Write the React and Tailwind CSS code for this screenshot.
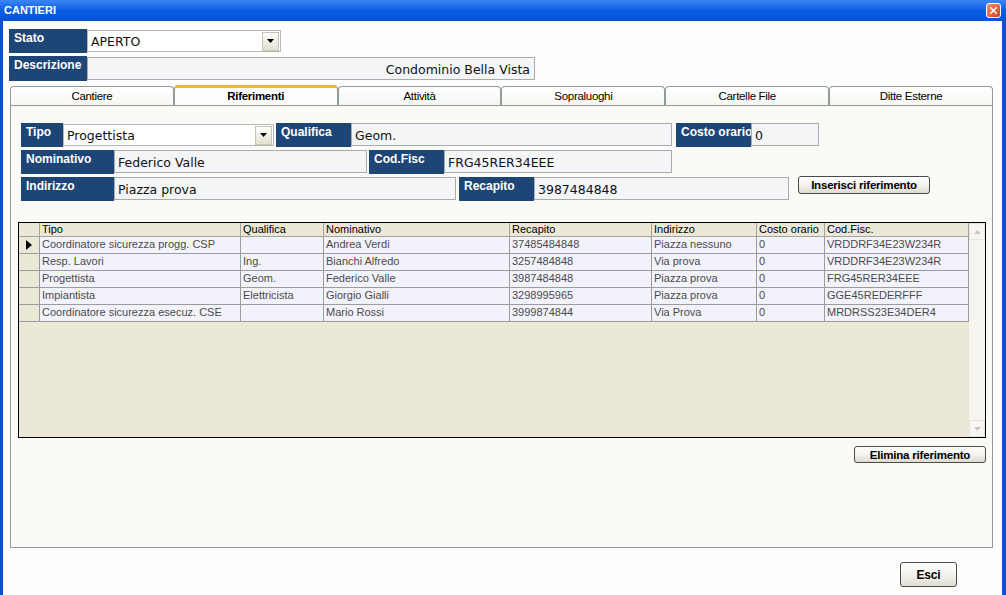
import { X } from "lucide-react";

const COLS = "grid grid-cols-[21px_201px_83px_186px_142px_105px_68px_144px]";

const righe = [
  ["Coordinatore sicurezza progg. CSP", "", "Andrea Verdi", "37485484848", "Piazza nessuno", "0", "VRDDRF34E23W234R"],
  ["Resp. Lavori", "Ing.", "Bianchi Alfredo", "3257484848", "Via prova", "0", "VRDDRF34E23W234R"],
  ["Progettista", "Geom.", "Federico Valle", "3987484848", "Piazza prova", "0", "FRG45RER34EEE"],
  ["Impiantista", "Elettricista", "Giorgio Gialli", "3298995965", "Piazza prova", "0", "GGE45REDERFFF"],
  ["Coordinatore sicurezza esecuz. CSE", "", "Mario Rossi", "3999874844", "Via Prova", "0", "MRDRSS23E34DER4"],
];

const intestazioni = ["Tipo", "Qualifica", "Nominativo", "Recapito", "Indirizzo", "Costo orario", "Cod.Fisc."];

const tabs = ["Cantiere", "Riferimenti", "Attività", "Sopraluoghi", "Cartelle File", "Ditte Esterne"];

function Etichetta({ className, children }) {
  return (
    <div className={`h-[24px] shrink-0 bg-[#1d4677] pl-[5px] pt-[2px] font-['Liberation_Sans',Arial,sans-serif] text-[12px] leading-[14px] font-bold whitespace-nowrap text-white ${className}`}>
      {children}
    </div>
  );
}

function Campo({ className, children, right }) {
  return (
    <div className={`flex h-[23px] shrink-0 items-center border border-[#a9abae] bg-[#f4f5f7] px-[3px] pt-[3px] font-['DejaVu_Sans',Verdana,sans-serif] text-[12.5px] text-[#111] ${right ? "justify-end" : ""} ${className}`}>
      {children}
    </div>
  );
}

function Freccia() {
  return (
    <div className="flex h-[19px] w-[17px] items-center justify-center border border-[#c9c5b5] bg-gradient-to-b from-[#fdfdfb] to-[#e4e1d2]">
      <svg width="7" height="4" viewBox="0 0 7 4">
        <path d="M0 0h7L3.5 4z" fill="#000" />
      </svg>
    </div>
  );
}

function Combo({ className, children }) {
  return (
    <div className={`flex h-[22px] shrink-0 items-center justify-between border border-[#b7b7b7] bg-white pr-[1px] pl-[3px] font-['DejaVu_Sans',Verdana,sans-serif] text-[12.5px] text-[#111] ${className}`}>
      <span className="pt-[2px]">{children}</span>
      <Freccia />
    </div>
  );
}

function Bottone({ className, children }) {
  return (
    <button className={`shrink-0 rounded-[3px] border border-[#4b4b4b] bg-gradient-to-b from-white via-[#f4f3ee] to-[#dedbcf] font-['Liberation_Sans',Arial,sans-serif] text-[11.5px] font-bold tracking-[-0.2px] text-black ${className}`}>
      {children}
    </button>
  );
}

export default function App() {
  return (
    <div className="flex h-[595px] w-[1006px] flex-col overflow-hidden bg-[#0a4fd6] font-['Liberation_Sans',Arial,sans-serif]">
      {/* barra titolo */}
      <div className="flex h-[21px] shrink-0 items-center justify-between bg-gradient-to-b from-[#3b86f5] via-[#0a5ce2] to-[#0352d8] pr-[5px] pl-[4px]">
        <span className="text-[11px] font-bold text-white">CANTIERI</span>
        <div className="flex h-[15px] w-[15px] items-center justify-center rounded-[3px] border border-white bg-gradient-to-br from-[#f08a6c] to-[#d4401f]">
          <X className="h-[11px] w-[11px] text-white" strokeWidth={3} />
        </div>
      </div>

      <div className="ml-[3px] mr-[4px] flex flex-1 flex-col bg-[#fdfdfb] pt-[8px]">
        <div className="flex flex-col gap-[3px] pl-[6px]">
          <div className="flex items-start">
            <Etichetta className="w-[78px]">Stato</Etichetta>
            <Combo className="mt-[1px] w-[194px]">APERTO</Combo>
          </div>
          <div className="flex items-start">
            <Etichetta className="h-[25px] w-[78px]">Descrizione</Etichetta>
            <Campo className="mt-[1px] w-[448px] pr-[4px]" right>Condominio Bella Vista</Campo>
          </div>
        </div>

        {/* schede */}
        <div className="mt-[4px] mr-[9px] ml-[7px] flex h-[20px]">
          {tabs.map((t) => (
            <div
              key={t}
              className={`flex flex-1 items-center justify-center rounded-t-[4px] border border-b-0 text-[11.5px] tracking-[-0.3px] ${t === "Riferimenti" ? "border-t-[3px] border-[#919b9c] border-t-[#f2b33d] bg-[#fdfdfb] font-bold text-black" : "mt-[1px] border-[#919b9c] bg-gradient-to-b from-white to-[#f6f6f3] pt-[2px] text-black"}`}
            >
              {t}
            </div>
          ))}
        </div>

        <div className="mr-[9px] ml-[7px] flex h-[443px] flex-col border border-[#919b9c] bg-[#fafaf7] pt-[17px] pl-[10px]">
          <div className="flex flex-col gap-[3px]">
            <div className="flex items-start">
              <Etichetta className="w-[42px]">Tipo</Etichetta>
              <Combo className="mt-[1px] w-[211px]">Progettista</Combo>
              <Etichetta className="ml-[2px] w-[75px]">Qualifica</Etichetta>
              <Campo className="w-[321px]">Geom.</Campo>
              <Etichetta className="ml-[4px] w-[75px]">Costo orario</Etichetta>
              <Campo className="w-[68px]">0</Campo>
            </div>
            <div className="flex items-start">
              <Etichetta className="w-[93px]">Nominativo</Etichetta>
              <Campo className="w-[253px]">Federico Valle</Campo>
              <Etichetta className="ml-[2px] w-[75px]">Cod.Fisc</Etichetta>
              <Campo className="w-[228px]">FRG45RER34EEE</Campo>
            </div>
            <div className="flex items-start">
              <Etichetta className="w-[93px]">Indirizzo</Etichetta>
              <Campo className="w-[342px]">Piazza prova</Campo>
              <Etichetta className="ml-[3px] w-[75px]">Recapito</Etichetta>
              <Campo className="w-[255px]">3987484848</Campo>
              <Bottone className="-mt-[1px] ml-[9px] h-[18px] w-[132px]">Inserisci riferimento</Bottone>
            </div>
          </div>

          {/* griglia */}
          <div className="mt-[21px] -ml-[3px] flex h-[216px] w-[968px] border border-black bg-[#ebe8d8] text-[11px]">
            <div className="flex flex-1 flex-col">
              <div className={`${COLS} h-[14px] border-b border-[#a5a39a] leading-[13px] text-black`}>
                <div className="border-r border-[#a5a39a]" />
                {intestazioni.map((h) => (
                  <div key={h} className="overflow-hidden border-r border-[#a5a39a] pl-[2px] whitespace-nowrap">
                    {h}
                  </div>
                ))}
              </div>
              {righe.map((r, i) => (
                <div key={i} className={`${COLS} h-[17px] border-b border-[#9c9c9c] leading-[15px] text-[#4a4a4a]`}>
                  <div className="flex items-center justify-center border-r border-[#9c9c9c] bg-[#ebe8d8]">
                    {i === 0 && (
                      <svg width="6" height="10" viewBox="0 0 6 10">
                        <path d="M0 0l6 5-6 5z" fill="#000" />
                      </svg>
                    )}
                  </div>
                  {r.map((c, j) => (
                    <div key={j} className="overflow-hidden border-r border-[#9c9c9c] bg-[#f2f3fa] pl-[2px] whitespace-nowrap">
                      {c}
                    </div>
                  ))}
                </div>
              ))}
            </div>
            {/* barra di scorrimento */}
            <div className="flex w-[16px] flex-col justify-between bg-[#f5f4ef]">
              <div className="flex h-[17px] items-center justify-center border border-[#e6e4dc] bg-[#f7f6f2]">
                <svg width="7" height="4" viewBox="0 0 7 4">
                  <path d="M3.5 0L7 4H0z" fill="#c9c7bd" />
                </svg>
              </div>
              <div className="flex h-[17px] items-center justify-center border border-[#e6e4dc] bg-[#f7f6f2]">
                <svg width="7" height="4" viewBox="0 0 7 4">
                  <path d="M0 0h7L3.5 4z" fill="#c9c7bd" />
                </svg>
              </div>
            </div>
          </div>

          <div className="mt-[8px] flex justify-end pr-[6px]">
            <Bottone className="h-[17px] w-[132px]">Elimina riferimento</Bottone>
          </div>
        </div>

        <div className="mt-[14px] flex justify-end pr-[45px]">
          <Bottone className="h-[25px] w-[57px] text-[12px]">Esci</Bottone>
        </div>
      </div>
    </div>
  );
}
